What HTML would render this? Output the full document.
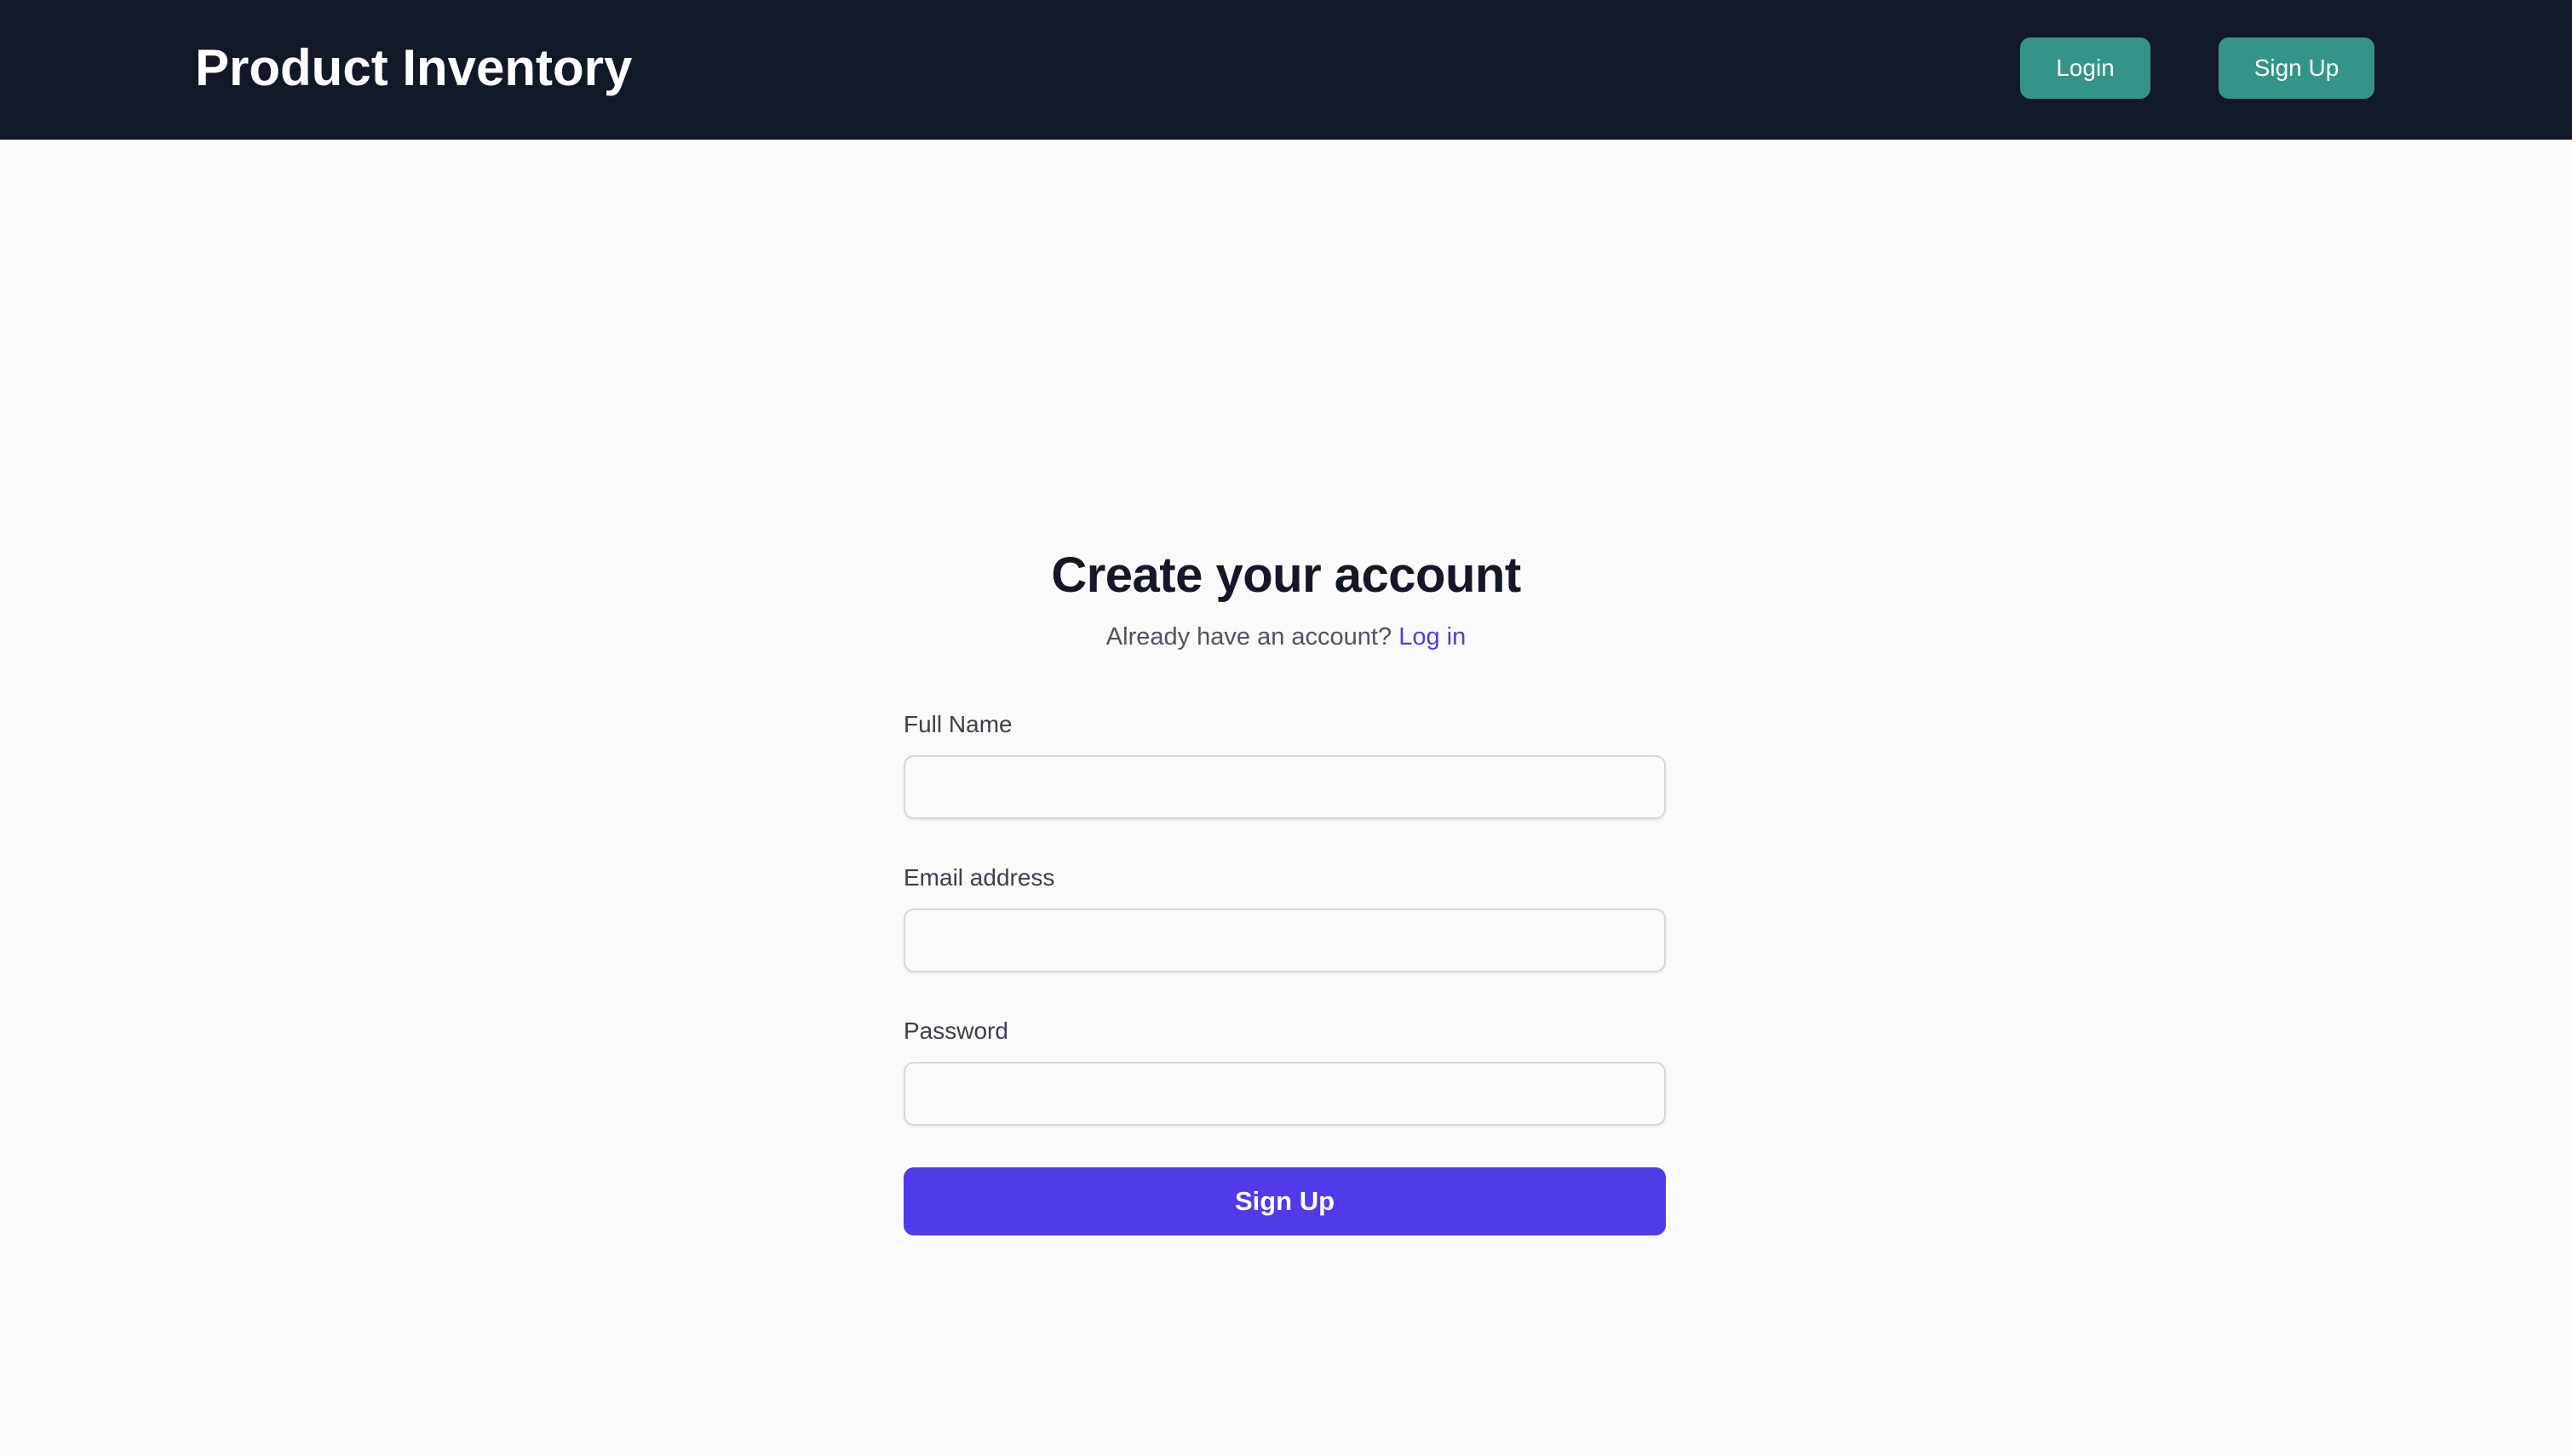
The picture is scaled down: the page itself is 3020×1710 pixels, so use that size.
<!DOCTYPE html>
<html><head><meta charset="utf-8"><style>
*{box-sizing:border-box;margin:0;padding:0}
html,body{width:3020px;height:1710px;overflow:hidden}
body{background:#f9fafb;font-family:"Liberation Sans",Arial,sans-serif;position:relative}
.hdr{position:absolute;left:0;top:0;width:3020px;height:164px;background:#111827}
.logo{position:absolute;left:229px;top:44px;font-size:60px;font-weight:bold;color:#fff;letter-spacing:0px;line-height:72px;white-space:nowrap}
.nb{position:absolute;top:44px;height:72px;background:#359489;color:#fff;border-radius:12px;font-size:28px;line-height:72px;text-align:center}
h1{position:absolute;left:0;width:3020px;top:640px;text-align:center;font-size:58px;line-height:72px;color:#111827;letter-spacing:-0.5px;font-weight:bold}
.sub{position:absolute;left:0;width:3020px;top:728px;text-align:center;font-size:29px;line-height:40px;color:#4b5563}
.sub span{color:#4f3bea;font-weight:500}
.lab{position:absolute;left:1061px;font-size:28px;line-height:36px;color:#374151}
.inp{position:absolute;left:1061px;width:895px;height:75px;border:2px solid #d4d6dc;border-radius:12px;background:#f9fafb;box-shadow:0 2px 3px rgba(0,0,0,.06)}
.btn{position:absolute;left:1061px;top:1371px;width:895px;height:80px;background:#4f3bea;border-radius:12px;color:#fff;font-size:31px;font-weight:bold;text-align:center;line-height:80px}
</style></head><body>
<div class="hdr">
<div class="logo">Product Inventory</div>
<div class="nb" style="left:2372px;width:153px">Login</div>
<div class="nb" style="left:2605px;width:183px">Sign Up</div>
</div>
<h1>Create your account</h1>
<div class="sub">Already have an account? <span>Log in</span></div>
<div class="lab" style="top:833px">Full Name</div>
<div class="inp" style="top:887px"></div>
<div class="lab" style="top:1013px">Email address</div>
<div class="inp" style="top:1067px"></div>
<div class="lab" style="top:1193px">Password</div>
<div class="inp" style="top:1247px"></div>
<div class="btn">Sign Up</div>
</body></html>
